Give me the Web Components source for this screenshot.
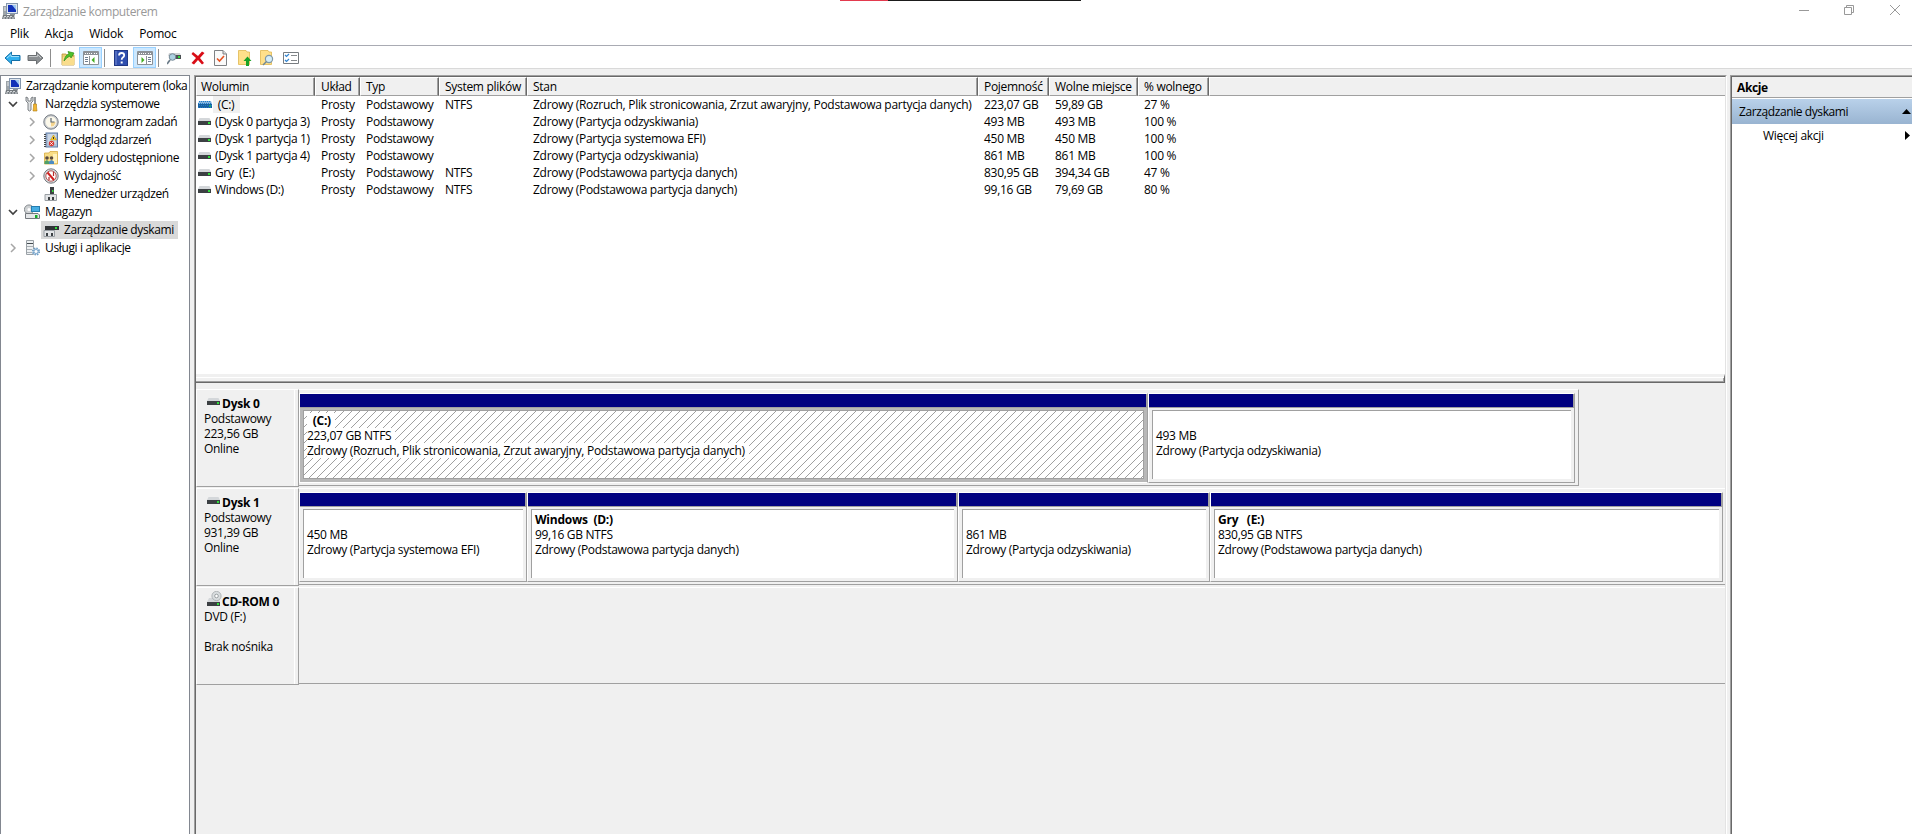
<!DOCTYPE html>
<html lang="pl">
<head>
<meta charset="utf-8">
<title>Zarządzanie komputerem</title>
<style>
  body {
    margin: 0;
    font: 12px/15px "Open Sans", "Noto Sans", sans-serif;
    letter-spacing: -0.3px;
    color: #000;
    background: #f0f0f0;
    overflow: hidden;
  }
</style>
</head>
<body>
<mmc-window></mmc-window>

<script>
// ---------- icons ----------
const ICONS = {
  computer: [16, 16, `<path d="M1 3H5V13H1Z" fill="#9ca3a8"/><path d="M2 5H4M2 7H4" stroke="#e8ecef"/><rect x="4.500" y="0.500" width="11" height="10" fill="#dfe6ee" stroke="#8496ad"/><path d="M6 2H14V9H6Z" fill="#1231b8"/><path d="M10 2H14V7Z" fill="#9cc7f2"/><path d="M8 11H13V12.500H8Z" fill="#8c9298"/><path d="M1 12H12L13 16H0Z" fill="#73797e"/><path d="M2 13.500H11M1 15H12" stroke="#d2d6d9" stroke-dasharray="2 1"/>`],
  tools: [16, 16, `<path d="M2 1V5L4 7V14Q5.500 16 7 14V7L9 5V1L7 2V5H4V2Z" fill="#dfe2e4" stroke="#6f7478" stroke-width=".9"/><path d="M11 1V8" stroke="#7c8185" stroke-width="1.600"/><path d="M9.500 8H12.500V11L13 15H9L9.500 11Z" fill="#f2b632" stroke="#b07c10" stroke-width=".6"/>`],
  clock: [16, 16, `<circle cx="8" cy="8" r="7.200" fill="#c9ccd0" stroke="#777d83"/><circle cx="8" cy="8" r="5.500" fill="#fbf8ea"/><path d="M8 8H12.500A4.500 4.500 0 0 1 8 12.500Z" fill="#f5d590"/><path d="M8 4V8H11.500" fill="none" stroke="#5d6872" stroke-width="1.200"/>`],
  events: [16, 16, `<rect x="3" y="1" width="11.500" height="14" fill="#aebfd6" stroke="#5f7da6"/><path d="M5 3H13M5 5H13M5 7H13M5 9H13M5 11H13" stroke="#e7edf5"/><path d="M2 2V15" stroke="#444" stroke-width="2" stroke-dasharray="1 1"/><path d="M10.500 3L13.500 8H7.500Z" fill="#ffcf30" stroke="#b98c00" stroke-width=".5"/><path d="M10.500 5V7" stroke="#333"/><circle cx="8.500" cy="11.500" r="2.700" fill="#d93a32"/><path d="M7.300 10.300L9.700 12.700M9.700 10.300L7.300 12.700" stroke="#fff"/>`],
  shared: [16, 16, `<path d="M1.500 3H6L7 1.500H14.500V14H1.500Z" fill="#f8dc85" stroke="#d8ac43" stroke-width=".8"/><path d="M10 4H14V13H10Z" fill="#fff1bb"/><circle cx="4" cy="8" r="1.800" fill="#5b4b40"/><circle cx="8.500" cy="8" r="1.800" fill="#5b4b40"/><path d="M1.500 14V11.500L4 10L6 11.500V14Z" fill="#4fa06a"/><path d="M6 14V11.500L8.500 10L11 11.500V14Z" fill="#4b8bc3"/>`],
  perf: [16, 16, `<circle cx="8" cy="8" r="7.200" fill="#d7d9db" stroke="#777b80"/><circle cx="8" cy="8" r="5.200" fill="#fff" stroke="#b55a59"/><path d="M4.500 4.500L11 12" stroke="#d21f1f" stroke-width="2"/><path d="M6 12V9M10.500 4V8" stroke="#b52b2b" stroke-width="1.200"/>`],
  device: [16, 16, `<path d="M7 1H11V8H7Z" fill="#3c4043"/><path d="M9 4H10.500V6H9Z" fill="#36db3c"/><path d="M2 8.500H13.500V14.500H2Z" fill="#e3e5e7" stroke="#999ea3"/><path d="M5 11H7V14H5ZM9 11H11V14H9Z" fill="#3c4043"/>`],
  storage: [16, 16, `<circle cx="5" cy="5.500" r="4.600" fill="#ced1d3" stroke="#70767b" stroke-width=".8"/><circle cx="5" cy="5.500" r="1.500" fill="#fff"/><rect x="7.500" y="2.500" width="8" height="5" fill="#47aee3" stroke="#247db0"/><path d="M1.500 9.500H14L15.500 11V14.500H1.500Z" fill="#e5e7e9" stroke="#74797e"/><path d="M11 11H13.500V14H11Z" fill="#16a928"/>`],
  diskmgmt: [16, 14, `<path d="M4 1H14L15.500 3.500H2.500Z" fill="#d4d7da"/><path d="M2 3H16V7H2Z" fill="#303336"/><path d="M12 4H14V6H12Z" fill="#2fe03c"/><path d="M1 7.500H11.500V13.500H1Z" fill="#e3e5e7" stroke="#999ea3"/><path d="M3 10H5V13H3ZM8 10H10V13H8Z" fill="#3c4043"/>`],
  services: [16, 16, `<path d="M2.500 .5H9.500V14.500H2.500Z" fill="#edf0f2" stroke="#9aa1a6"/><path d="M3 3.500H9" stroke="#444b50"/><path d="M3 6.500H9M3 9.500H8M3 12.500H8" stroke="#aab0b5"/><circle cx="12" cy="11.500" r="3.200" fill="#d6e7f5" stroke="#6d9cc4" stroke-width="1.800" stroke-dasharray="1.500 1"/><circle cx="12" cy="11.500" r="2" fill="#fff" stroke="#6d9cc4" stroke-width=".8"/>`],
  drive: [13, 7, `<path d="M1.500 0H11.500L13 3H0Z" fill="#d4d7da"/><path d="M0 3H13V7H0Z" fill="#3c4043"/><path d="M10 4H12V6H10Z" fill="#2fe03c"/>`],
  driveSel: [14, 7, `<path d="M1 0H13L14 3H0Z" fill="#86b4dc"/><path d="M0 3H14V7H0Z" fill="#1a5f9c"/><path d="M1 .5H13M0 2.500H14M1 4.500H14M0 6.500H14" stroke="#1b7bcb" stroke-dasharray="1 1"/><path d="M11 4H13V6H11Z" fill="#19a47f"/>`],
  cdrom: [15, 15, `<path d="M2 7H12L13 11H0Z" fill="#d4d7da"/><path d="M0 11H13V15H0Z" fill="#3c4043"/><path d="M10 12H12V14H10Z" fill="#2fe03c"/><circle cx="9.500" cy="5" r="4.600" fill="#d9dddf" stroke="#a3a8ab" stroke-width=".8"/><circle cx="9.500" cy="5" r="1.800" fill="#fff" stroke="#888e91" stroke-width=".8"/>`],
  back: [17, 14, `<path d="M1 7L7.500 1V4.500H16V9.500H7.500V13Z" fill="#31b0ee" stroke="#126fa8"/><path d="M3 7L7 3.500V5.500H15" fill="none" stroke="#a2e0fb"/>`],
  forward: [17, 14, `<path d="M16 7L9.500 1V4.500H1V9.500H9.500V13Z" fill="#8b8f92" stroke="#6a6e71"/><path d="M2 5.500H10.500V3.500L14 7" fill="none" stroke="#c4c7c9"/>`],
  folderUp: [16, 16, `<path d="M2 4H6L7 5H14V15H2Z" fill="#eccb72" stroke="#b9953a" stroke-width=".8"/><path d="M3 7H15L14 15H2Z" fill="#f9dd8d"/><path d="M4 11Q5 5 9 4L8 1.500L14 3L11 8L10 6Q7 7 4 11Z" fill="#4fc22a" stroke="#2d8c17" stroke-width=".7"/>`],
  paneLeft: [16, 14, `<path d="M.5 .5H15.500V13.500H.5Z" fill="#fff" stroke="#8c9196"/><path d="M1 1H15V4H1Z" fill="#8c9196"/><path d="M2 2.500H10M11 2.500H14" stroke="#fff" stroke-dasharray="1 1"/><path d="M6.500 5V13" stroke="#8c9196"/><path d="M2 6.500H5M2 8.500H5M2 10.500H5" stroke="#6e7e91"/><path d="M11.500 6V12L8.500 9Z" fill="#43ae22"/>`],
  paneRight: [16, 14, `<path d="M.5 .5H15.500V13.500H.5Z" fill="#fff" stroke="#8c9196"/><path d="M1 1H15V4H1Z" fill="#8c9196"/><path d="M2 2.500H10M11 2.500H14" stroke="#fff" stroke-dasharray="1 1"/><path d="M9.500 5V13" stroke="#8c9196"/><path d="M11 6.500H14M11 8.500H14M11 10.500H14" stroke="#6e7e91"/><path d="M4.500 6V12L7.500 9Z" fill="#43ae22"/>`],
  help: [14, 16, `<rect x=".5" y=".5" width="13" height="15" fill="#304faf" stroke="#203785"/><path d="M2 1V15" stroke="#758bd1"/><path d="M5 5.500Q5.200 3 7.500 3Q10.200 3 10.200 5.300Q10.200 6.600 8.800 7.500Q7.700 8.200 7.700 9.800" fill="none" stroke="#fff" stroke-width="1.800"/><path d="M6.700 11.500H8.700V13.500H6.700Z" fill="#fff"/>`],
  rescan: [15, 14, `<path d="M2 2H13L14 5H1Z" fill="#d0d3d5"/><path d="M3 4H14V8H3Z" fill="#4b5053"/><path d="M11 5H13V7H11Z" fill="#2fdc3c"/><circle cx="5.500" cy="6" r="3.300" fill="#acd1e1" stroke="#758895"/><path d="M3 9L0 13" stroke="#6b7b88" stroke-width="1.700"/>`],
  remove: [14, 14, `<path d="M2 1L7 5L11 .5L13.500 2L9 7L13 12L11 13.500L7 9L3 13.500L.5 12L5 7L.5 3Z" fill="#d90d16"/>`],
  check: [13, 16, `<path d="M.5 .5H9L12.500 4V15.500H.5Z" fill="#fafafa" stroke="#7e8184"/><path d="M9 .5V4H12.500" fill="#ddd" stroke="#7e8184"/><path d="M3 8.500L5.500 11L10 6" fill="none" stroke="#e65322" stroke-width="1.600"/>`],
  upload: [14, 16, `<path d="M.5 .5H8L9 2H11.500V14.500H.5Z" fill="#ffe08a" stroke="#dfb851" stroke-width=".8"/><path d="M9.500 6.500L13.500 11H11V16H8V11H5.500Z" fill="#19a224"/>`],
  find: [15, 16, `<path d="M.5 .5H8L9 2H11.500V14.500H.5Z" fill="#ffe08a" stroke="#dfb851" stroke-width=".8"/><circle cx="9" cy="9" r="3.600" fill="#d4edf8" stroke="#7f98a6" stroke-width="1.200"/><path d="M6.500 11.500L3 15" stroke="#6f8797" stroke-width="1.400"/>`],
  list: [16, 12, `<path d="M.5 .5H15.500V11.500H.5Z" fill="#fff" stroke="#777c80"/><path d="M8 3.500H14M8 8.500H14" stroke="#85898c"/><path d="M2 3L3.500 4.500L6 2M2 8L3.500 9.500L6 7" fill="none" stroke="#3285d1" stroke-width="1.200"/>`],
};

class SysIcon extends HTMLElement {
  constructor() {
    super();
    this.attachShadow({ mode: 'open' });
  }
  connectedCallback() {
    const [w, h, body] = ICONS[this.getAttribute('name')];
    this.shadowRoot.innerHTML = `
      <style>:host { display: block; flex: none; white-space: normal; } svg { display: block; }</style>
      <svg width="${w}" height="${h}" viewBox="0 0 ${w} ${h}" aria-hidden="true">${body}</svg>`;
  }
}
customElements.define('sys-icon', SysIcon);

// ---------- title bar, menu, toolbar ----------
class TitleBar extends HTMLElement {
  constructor() {
    super();
    this.attachShadow({ mode: 'open' }).innerHTML = `
      <style>
        :host { display: flex; height: 24px; background: #fff; color: #999; position: relative; }
        sys-icon { margin: 3px 5px 0 2px; }
        .title { flex: 1; line-height: 24px; letter-spacing: -0.42px; }
        .strip { position: absolute; left: 840px; top: 0; width: 241px; height: 1px; background: linear-gradient(90deg, #e33a4e 48px, #1b1b1b 48px); }
        .buttons { margin-right: 12px; display: flex; gap: 35px; padding-top: 5px; }
        .buttons svg:last-child { margin-left: 1px; }
        svg { display: block; fill: none; stroke: #999; }
      </style>
      <sys-icon name="computer"></sys-icon>
      <span class="title"><slot></slot></span>
      <div class="strip"></div>
      <div class="buttons">
        <svg width="10" height="10"><path d="M0 5.500H10"/></svg>
        <svg width="10" height="10"><path d="M.5 2.500H7.500V9.500H.5ZM2.500 2.500V.5H9.500V7.500H7.500"/></svg>
        <svg width="10" height="10"><path d="M0 0L10 10M10 0L0 10"/></svg>
      </div>`;
  }
}
customElements.define('title-bar', TitleBar);

class MenuBar extends HTMLElement {
  constructor() {
    super();
    this.attachShadow({ mode: 'open' }).innerHTML = `
      <style>
        :host { display: flex; height: 21px; padding-left: 10px; background: #fff; border-bottom: 1px solid #a9abb3; line-height: 20px; letter-spacing: -0.2px; }
        span { margin-right: 16px; }
      </style>
      <span>Plik</span><span>Akcja</span><span>Widok</span><span>Pomoc</span>`;
  }
}
customElements.define('menu-bar', MenuBar);

class ToolBar extends HTMLElement {
  constructor() {
    super();
    this.attachShadow({ mode: 'open' }).innerHTML = `
      <style>
        :host { display: flex; align-items: center; box-sizing: border-box; height: 23px; padding: 1px 0 0 1px; background: #fff; border-bottom: 1px solid #d9d9d9; }
        .b { display: flex; align-items: center; justify-content: center; width: 23px; height: 21px; box-sizing: border-box; }
        .on { background: #cce8ff; border: 1px solid #99d1ff; }
        .gap { margin-left: 1px; }
        i { width: 1px; height: 18px; margin: 0 4px 0 2px; background: #8d8d8d; }
        i.first { margin: 0 5px 0 3px; }
      </style>
      <div class="b"><sys-icon name="back"></sys-icon></div>
      <div class="b"><sys-icon name="forward"></sys-icon></div>
      <i class="first"></i>
      <div class="b"><sys-icon name="folderUp"></sys-icon></div>
      <div class="b on"><sys-icon name="paneLeft"></sys-icon></div>
      <i></i>
      <div class="b"><sys-icon name="help"></sys-icon></div>
      <div class="b on gap"><sys-icon name="paneRight"></sys-icon></div>
      <i></i>
      <div class="b"><sys-icon name="rescan"></sys-icon></div>
      <div class="b"><sys-icon name="remove"></sys-icon></div>
      <div class="b"><sys-icon name="check"></sys-icon></div>
      <div class="b gap"><sys-icon name="upload"></sys-icon></div>
      <div class="b"><sys-icon name="find"></sys-icon></div>
      <div class="b"><sys-icon name="list"></sys-icon></div>`;
  }
}
customElements.define('tool-bar', ToolBar);

// ---------- tree ----------
class TreeItem extends HTMLElement {
  constructor() {
    super();
    this.attachShadow({ mode: 'open' });
  }
  connectedCallback() {
    const arrow = {
      open: '<path d="M1 3L5 7L9 3" stroke="#404040" stroke-width="1.700"/>',
      closed: '<path d="M3 1L7 5L3 9" stroke="#a6a6a6" stroke-width="1.500"/>',
    }[this.getAttribute('state')] || '';
    this.shadowRoot.innerHTML = `
      <style>
        :host { display: flex; align-items: center; height: 18px; white-space: nowrap; padding-left: calc(var(--level, 0) * 19px); letter-spacing: -0.36px; }
        .arrow { flex: none; width: 10px; height: 10px; margin: 0 6px 0 7px; fill: none; }
        .hit { display: flex; align-items: center; height: 18px; margin-left: -2px; padding-left: 2px; }
        sys-icon { width: 16px; }
        span { line-height: 18px; padding: 0 4px 0 5px; }
        :host([root]) { letter-spacing: -0.44px; }
        :host([root]) .arrow { display: none; }
        :host([root]) .hit { margin-left: 2px; }
        :host([root]) span { padding-right: 0; }
        :host([selected]) .hit { background: #d9d9d9; }
      </style>
      <svg class="arrow" viewBox="0 0 10 10">${arrow}</svg>
      <div class="hit"><sys-icon name="${this.getAttribute('icon')}"></sys-icon><span><slot></slot></span></div>`;
  }
}
customElements.define('tree-item', TreeItem);

class TreeView extends HTMLElement {
  constructor() {
    super();
    this.attachShadow({ mode: 'open' }).innerHTML = `
      <style>
        :host { display: block; box-sizing: border-box; border: 1px solid #828790; border-bottom: 0; background: #fff; padding-top: 1px; }
        .l1 { --level: 1; }
      </style>
      <tree-item root icon="computer">Zarządzanie komputerem (loka</tree-item>
      <tree-item state="open" icon="tools">Narzędzia systemowe</tree-item>
      <tree-item class="l1" state="closed" icon="clock">Harmonogram zadań</tree-item>
      <tree-item class="l1" state="closed" icon="events">Podgląd zdarzeń</tree-item>
      <tree-item class="l1" state="closed" icon="shared">Foldery udostępnione</tree-item>
      <tree-item class="l1" state="closed" icon="perf">Wydajność</tree-item>
      <tree-item class="l1" icon="device">Menedżer urządzeń</tree-item>
      <tree-item state="open" icon="storage">Magazyn</tree-item>
      <tree-item class="l1" selected icon="diskmgmt">Zarządzanie dyskami</tree-item>
      <tree-item state="closed" icon="services">Usługi i aplikacje</tree-item>`;
  }
}
customElements.define('tree-view', TreeView);

// ---------- volume list ----------
const COLUMNS = ['Wolumin', 'Układ', 'Typ', 'System plików', 'Stan', 'Pojemność', 'Wolne miejsce', '% wolnego', ''];
const VOLUMES = [
  [' (C:)', 'NTFS', 'Zdrowy (Rozruch, Plik stronicowania, Zrzut awaryjny, Podstawowa partycja danych)', '223,07 GB', '59,89 GB', '27 %'],
  ['(Dysk 0 partycja 3)', '', 'Zdrowy (Partycja odzyskiwania)', '493 MB', '493 MB', '100 %'],
  ['(Dysk 1 partycja 1)', '', 'Zdrowy (Partycja systemowa EFI)', '450 MB', '450 MB', '100 %'],
  ['(Dysk 1 partycja 4)', '', 'Zdrowy (Partycja odzyskiwania)', '861 MB', '861 MB', '100 %'],
  ['Gry  (E:)', 'NTFS', 'Zdrowy (Podstawowa partycja danych)', '830,95 GB', '394,34 GB', '47 %'],
  ['Windows (D:)', 'NTFS', 'Zdrowy (Podstawowa partycja danych)', '99,16 GB', '79,69 GB', '80 %'],
];

class VolumeList extends HTMLElement {
  constructor() {
    super();
    const head = COLUMNS.map((c) => `<div>${c}</div>`).join('');
    const rows = VOLUMES.map(([name, fs, ...rest], i) => `
      <div class="row${i ? '' : ' current'}">
        <div class="name"><sys-icon name="${i ? 'drive' : 'driveSel'}"></sys-icon><span>${name}</span></div>
        ${['Prosty', 'Podstawowy', fs, ...rest].map((t) => `<div>${t}</div>`).join('')}
      </div>`).join('');
    this.attachShadow({ mode: 'open' }).innerHTML = `
      <style>
        :host { display: block; height: 297px; background: #fff; }
        .head, .row { display: grid; grid-template-columns: 119px 45px 79px 88px 451px 71px 89px 71px 1fr; white-space: pre; }
        .head { height: 19px; box-sizing: border-box; border-bottom: 1px solid #696969; background: #f0f0f0; }
        .head div { box-sizing: border-box; padding-left: 5px; border: solid; border-width: 1px; border-color: #fff #696969 #a0a0a0 #fff; box-shadow: inset -1px 0 #a0a0a0; line-height: 17px; }
        .head div:first-child { padding-left: 4px; }
        .head div:last-child { border-right: 0; box-shadow: none; }
        .row { height: 17px; line-height: 17px; letter-spacing: -0.29px; }
        .row > div { padding-left: 6px; }
        .row > .name { display: flex; align-items: center; padding-left: 2px; letter-spacing: -0.36px; }
        .name sys-icon { width: 14px; }
        .name span { margin-left: 1px; padding: 0 2px; }
        .current .name span { background: #f0f0f0; padding-right: 6px; }
      </style>
      <div class="head">${head}</div>
      ${rows}`;
  }
}
customElements.define('volume-list', VolumeList);

// ---------- disks ----------
class DiskPartition extends HTMLElement {
  constructor() {
    super();
    this.attachShadow({ mode: 'open' });
  }
  connectedCallback() {
    const hatch = this.hasAttribute('selected') ? `
      <svg class="hatch" width="100%" height="100%">
        <defs><pattern id="h" width="8" height="8" patternUnits="userSpaceOnUse">
          <path d="M0 7h1v1h-1zM1 6h1v1h-1zM2 5h1v1h-1zM3 4h1v1h-1zM4 3h1v1h-1zM5 2h1v1h-1zM6 1h1v1h-1zM7 0h1v1h-1z" fill="#a0a0a0" shape-rendering="crispEdges"/>
        </pattern></defs>
        <rect width="100%" height="100%" fill="url(#h)"/>
      </svg>` : '';
    this.shadowRoot.innerHTML = `
      <style>
        :host { display: flex; flex-direction: column; box-sizing: border-box; height: 90px; width: var(--w); border: 1px solid; border-color: #fff #a0a0a0 #a0a0a0 #fff; }
        .bar { height: 13px; background: #000080; border-bottom: 1px solid #a0a0a0; border-right: 1px solid #a0a0a0; }
        .frame { flex: 1; display: grid; padding: 2px 3px 3px; }
        .body { position: relative; box-sizing: border-box; background: #fff; border-left: 1px solid #a0a0a0; border-top: 1px solid #a0a0a0; padding: 2px 3px 0; }
        .hatch { position: absolute; inset: 0; }
        .text { position: relative; display: flex; flex-direction: column; align-items: flex-start; white-space: pre; }
        .text > * { height: 15px; background: #fff; padding-right: 4px; }
        b { letter-spacing: var(--bold-ls); }
        :host([selected]) .frame { background: #b8b8b8; }
        :host([selected]) .body { border: 1px solid #a0a0a0; }
        :host([selected]) { border-bottom-color: #fff; }
      </style>
      <div class="bar"></div>
      <div class="frame"><div class="body">${hatch}
        <div class="text"><b>${this.getAttribute('name') || ''}</b><span>${this.getAttribute('size')}</span><span>${this.getAttribute('status')}</span></div>
      </div></div>`;
  }
}
customElements.define('disk-partition', DiskPartition);

class DiskRow extends HTMLElement {
  constructor() {
    super();
    this.attachShadow({ mode: 'open' });
  }
  connectedCallback() {
    const lines = this.getAttribute('info').split('|').map((t) => `<span>${t}</span>`).join('');
    this.shadowRoot.innerHTML = `
      <style>
        :host { display: grid; grid-template-columns: 103px 1fr; height: 99px; box-sizing: border-box; }
        .label { box-sizing: border-box; height: 98px; border: 1px solid; border-color: #fff #a0a0a0 #a0a0a0 #fff; box-shadow: inset -3px 0 #f0f0f0, inset -4px 0 #fff; padding: 5px 0 0 7px; }
        .name { display: flex; align-items: flex-start; height: 16px; line-height: 17px; letter-spacing: var(--bold-ls); }
        .name sys-icon { width: 15px; margin: 3px 0 0 3px; }
        :host([cd]) .name sys-icon { margin-top: -2px; }
        .label > span { display: block; height: 15px; }
        .map { display: flex; box-sizing: border-box; height: 97px; width: var(--mapw, 100%); border-top: 1px solid #fff; border-bottom: 1px solid #a0a0a0; padding: 3px 0 0; }
        :host([boxed]) .map { border-right: 1px solid #a0a0a0; }
      </style>
      <div class="label"><div class="name"><sys-icon name="${this.hasAttribute('cd') ? 'cdrom' : 'drive'}"></sys-icon><b>${this.getAttribute('name')}</b></div>${lines}</div>
      <div class="map"><slot></slot></div>`;
  }
}
customElements.define('disk-row', DiskRow);

class DiskMap extends HTMLElement {
  constructor() {
    super();
    this.attachShadow({ mode: 'open' }).innerHTML = `
      <style>
        :host { display: block; background: #f0f0f0; }
        .splitter { height: 9px; box-sizing: border-box; border-top: 3px solid #f0f0f0; border-bottom: 1px solid #696969; border-right: 1px solid #696969; box-shadow: inset 0 1px #fff, inset -1px -1px #a0a0a0; margin-bottom: 6px; }
      </style>
      <div class="splitter"></div>
      <disk-row boxed name="Dysk 0" info="Podstawowy|223,56 GB|Online" style="--mapw:1280px">
        <disk-partition selected name="  (C:)" size="223,07 GB NTFS" status="Zdrowy (Rozruch, Plik stronicowania, Zrzut awaryjny, Podstawowa partycja danych)" style="--w:849px"></disk-partition>
        <disk-partition size="493 MB" status="Zdrowy (Partycja odzyskiwania)" style="--w:427px"></disk-partition>
      </disk-row>
      <disk-row name="Dysk 1" info="Podstawowy|931,39 GB|Online">
        <disk-partition size="450 MB" status="Zdrowy (Partycja systemowa EFI)" style="--w:228px"></disk-partition>
        <disk-partition name="Windows  (D:)" size="99,16 GB NTFS" status="Zdrowy (Podstawowa partycja danych)" style="--w:431px"></disk-partition>
        <disk-partition size="861 MB" status="Zdrowy (Partycja odzyskiwania)" style="--w:252px"></disk-partition>
        <disk-partition name="Gry   (E:)" size="830,95 GB NTFS" status="Zdrowy (Podstawowa partycja danych)" style="--w:513px"></disk-partition>
      </disk-row>
      <disk-row cd name="CD-ROM 0" info="DVD (F:)||Brak nośnika"></disk-row>`;
  }
}
customElements.define('disk-map', DiskMap);

// ---------- actions ----------
class ActionPane extends HTMLElement {
  constructor() {
    super();
    this.attachShadow({ mode: 'open' }).innerHTML = `
      <style>
        :host { display: block; background: #fff; border-left: 1px solid #a0a0a0; border-top: 1px solid #a0a0a0; box-shadow: inset 1px 1px #696969; padding: 1px 0 0 1px; }
        .head { height: 20px; background: #f0f0f0; border-bottom: 1px solid #a0a0a0; line-height: 21px; padding-left: 5px; letter-spacing: -0.4px; margin-bottom: 1px; }
        .item { display: flex; align-items: center; justify-content: space-between; height: 25px; }
        .group { background: linear-gradient(#b9d1ea, #99b4d1); padding: 0 1px 0 7px; letter-spacing: -0.4px; }
        .more { padding: 0 2px 0 31px; height: 23px; }
        svg { display: block; }
      </style>
      <div class="head"><b>Akcje</b></div>
      <div class="item group"><span>Zarządzanie dyskami</span><svg width="9" height="5"><path d="M4.500 0L9 5H0Z"/></svg></div>
      <div class="item more"><span>Więcej akcji</span><svg width="5" height="9"><path d="M0 0L5 4.500L0 9Z"/></svg></div>`;
  }
}
customElements.define('action-pane', ActionPane);

// ---------- window ----------
class MmcWindow extends HTMLElement {
  constructor() {
    super();
    this.attachShadow({ mode: 'open' }).innerHTML = `
      <style>
        :host { display: flex; flex-direction: column; height: 834px; --bold-ls: -0.25px; }
        .panes { flex: 1; display: grid; grid-template-columns: 190px 1533px 1fr; column-gap: 4px; padding-top: 6px; }
        .main { box-sizing: border-box; border: solid #a0a0a0; border-width: 1px 1px 0; border-right-color: #fff; background: #f0f0f0; }
        .inner { height: 100%; box-sizing: border-box; border: solid #696969; border-width: 1px 1px 0; border-right-color: #e3e3e3; }
        action-pane { margin-left: -1px; }
      </style>
      <title-bar>Zarządzanie komputerem</title-bar>
      <menu-bar></menu-bar>
      <tool-bar></tool-bar>
      <div class="panes">
        <tree-view></tree-view>
        <div class="main"><div class="inner"><volume-list></volume-list><disk-map></disk-map></div></div>
        <action-pane></action-pane>
      </div>`;
  }
}
customElements.define('mmc-window', MmcWindow);
</script>
</body>
</html>
